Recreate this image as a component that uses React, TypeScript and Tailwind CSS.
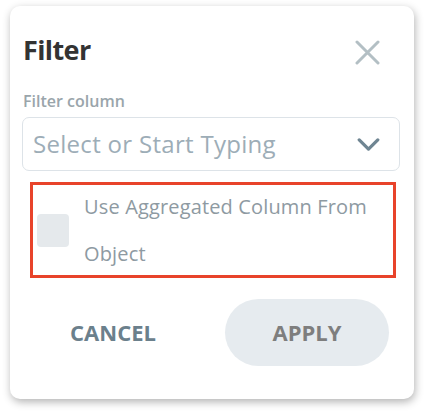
import React from 'react';

const font = { fontFamily: '"Open Sans", "Noto Sans", sans-serif' };

export default function App() {
  return (
    <div className="w-[424px] h-[414px] bg-white" style={font}>
      <div className="ml-[10px] pt-[6px]">
        <div className="w-[404px] h-[393px] rounded-[10px] bg-white shadow-[1px_3px_8px_rgba(0,0,0,0.3)] pl-[12px] pr-[14px] pt-[24px]">
          <div className="flex items-start justify-between">
            <h1 className="ml-[1px] text-[27px] leading-[40px] font-bold tracking-[-0.6px] text-[#333333]">Filter</h1>
            <button className="mt-[10px] mr-[20px] w-[25px] h-[25px] text-[#b3bfc4]">
              <svg viewBox="0 0 25 25" width="25" height="25" fill="none" stroke="currentColor" strokeWidth="3" strokeLinecap="round">
                <path d="M2 2L23 23M23 2L2 23" />
              </svg>
            </button>
          </div>
          <div className="mt-[20px] ml-[1px] text-[16px] leading-[22px] font-semibold text-[#9aa5ab]">Filter column</div>
          <div className="mt-[5px] h-[54px] rounded-[7px] border border-[#dde3e8] flex items-center justify-between pl-[10px] pr-[19px]">
            <span className="text-[24px] tracking-[0.3px] text-[#9dadb7]">Select or Start Typing</span>
            <svg viewBox="0 0 24 14" width="23" height="13" fill="none" stroke="#6f8592" strokeWidth="3.5" strokeLinecap="round" strokeLinejoin="round">
              <path d="M2 2L12 12L22 2" />
            </svg>
          </div>
          <div className="mt-[11px] ml-[8px] w-[366px] h-[96px] border-[3px] border-[#e8432a] flex items-center pl-[4px]">
            <div className="w-[32px] h-[33px] rounded-[4px] bg-[#e5e9ec] shrink-0" />
            <div className="ml-[15px] text-[20px] leading-[47px] tracking-[0.15px] text-[#8e9aa2]">
              Use Aggregated Column From
              <br />
              Object
            </div>
          </div>
          <div className="mt-[21px] flex items-center">
            <div className="w-[182px] text-center text-[22px] font-bold text-[#6b808c]">CANCEL</div>
            <button className="ml-[21px] w-[164px] h-[67px] rounded-full bg-[#e6ebef] text-[22px] font-bold text-[#7e7e7e]">APPLY</button>
          </div>
        </div>
      </div>
    </div>
  );
}
